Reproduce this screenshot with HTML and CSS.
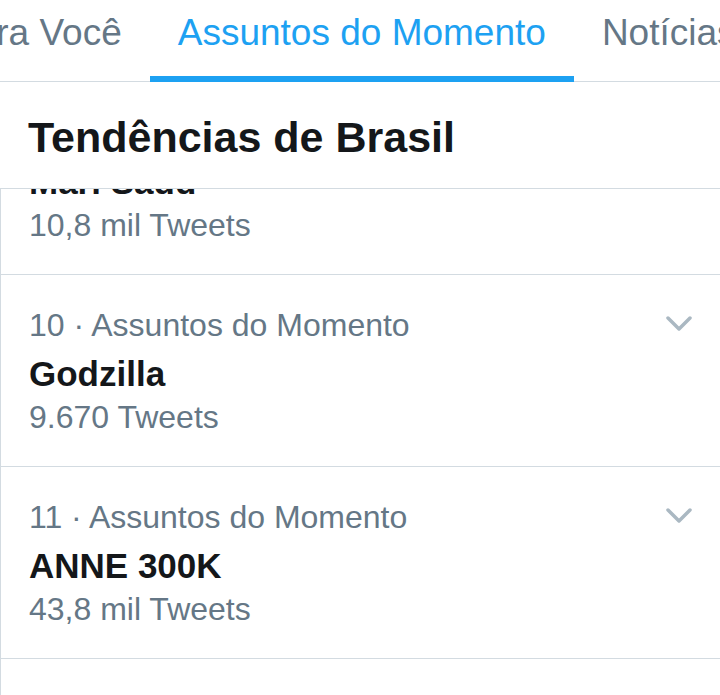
FILE: index.html
```html
<!DOCTYPE html>
<html lang="pt-BR">
<head>
  <meta charset="UTF-8">
  <meta name="viewport" content="width=device-width, initial-scale=1.0">
  <title>Assuntos do Momento</title>
  <link rel="stylesheet" href="styles.css">
</head>
<body>
  <div class="app">
    <nav class="tabs">
      <div class="tab">Para Você</div>
      <div class="tab active">Assuntos do Momento</div>
      <div class="tab">Notícias</div>
      <div class="tab">Esportes</div>
    </nav>

    <div class="section-header">
      <h1 class="section-title">Tendências de Brasil</h1>
    </div>

    <div class="trend-list">
      <div class="trend scrolled">
        <div class="trend-body">
          <div class="trend-meta">9 · Assuntos do Momento</div>
          <div class="trend-name">Mari Sadd</div>
          <div class="trend-count">10,8 mil Tweets</div>
        </div>
        <svg class="chevron" viewBox="0 0 26 16"><path d="M2 2 L13 13 L24 2" /></svg>
      </div>

      <div class="trend">
        <div class="trend-body">
          <div class="trend-meta">10 · Assuntos do Momento</div>
          <div class="trend-name">Godzilla</div>
          <div class="trend-count">9.670 Tweets</div>
        </div>
        <svg class="chevron" viewBox="0 0 26 16"><path d="M2 2 L13 13 L24 2" /></svg>
      </div>

      <div class="trend">
        <div class="trend-body">
          <div class="trend-meta">11 · Assuntos do Momento</div>
          <div class="trend-name">ANNE 300K</div>
          <div class="trend-count">43,8 mil Tweets</div>
        </div>
        <svg class="chevron" viewBox="0 0 26 16"><path d="M2 2 L13 13 L24 2" /></svg>
      </div>

      <div class="trend">
        <div class="trend-body">
          <div class="trend-meta">12 · Assuntos do Momento</div>
          <div class="trend-name">#FicaDica</div>
          <div class="trend-count">5.210 Tweets</div>
        </div>
        <svg class="chevron" viewBox="0 0 26 16"><path d="M2 2 L13 13 L24 2" /></svg>
      </div>
    </div>
  </div>
</body>
</html>
```

FILE: styles.css
```css
* {
  margin: 0;
  padding: 0;
  box-sizing: border-box;
}

html, body {
  height: 100%;
}

body {
  font-family: "Liberation Sans", Arial, sans-serif;
  background: #fff;
  color: #14171a;
  overflow: hidden;
}

.app {
  height: 100%;
  display: flex;
  flex-direction: column;
}

/* abas do topo */
.tabs {
  display: flex;
  height: 82px;
  flex-shrink: 0;
  margin-left: -77px;
  border-bottom: 1px solid #d3dbe1;
  white-space: nowrap;
}

.tab {
  height: 82px;
  margin-bottom: -1px;
  padding: 11px 28px 0;
  font-size: 37px;
  line-height: 44px;
  color: #657786;
  border-bottom: 6px solid transparent;
  flex-shrink: 0;
}

.tab.active {
  color: #1da1f2;
  border-bottom-color: #1da1f2;
}

/* cabeçalho da seção */
.section-header {
  flex-shrink: 0;
  padding: 30px 28px 26px;
  border-bottom: 1px solid #d3dbe1;
  position: relative;
  z-index: 1;
  background: #fff;
}

.section-title {
  font-size: 43px;
  line-height: 50px;
  font-weight: 700;
  color: #14171a;
}

/* lista de tendências */
.trend-list {
  flex: 1;
  overflow: hidden;
  border-left: 1px solid #d3dbe1;
}

.trend {
  display: flex;
  align-items: flex-start;
  padding: 31px 28px 30px;
  border-bottom: 1px solid #d3dbe1;
}

.trend.scrolled {
  margin-top: -106px;
}

.trend-body {
  flex: 1;
}

.trend-meta {
  font-size: 32px;
  line-height: 38px;
  color: #657786;
}

.trend-name {
  margin-top: 9px;
  font-size: 35px;
  line-height: 42px;
  font-weight: 700;
  color: #14171a;
}

.trend-count {
  margin-top: 3px;
  font-size: 32px;
  line-height: 38px;
  color: #657786;
}

.chevron {
  width: 26px;
  height: 16px;
  margin-top: 10px;
  fill: none;
  stroke: #aab8c2;
  stroke-width: 3.5;
  stroke-linecap: round;
  stroke-linejoin: round;
}
```
